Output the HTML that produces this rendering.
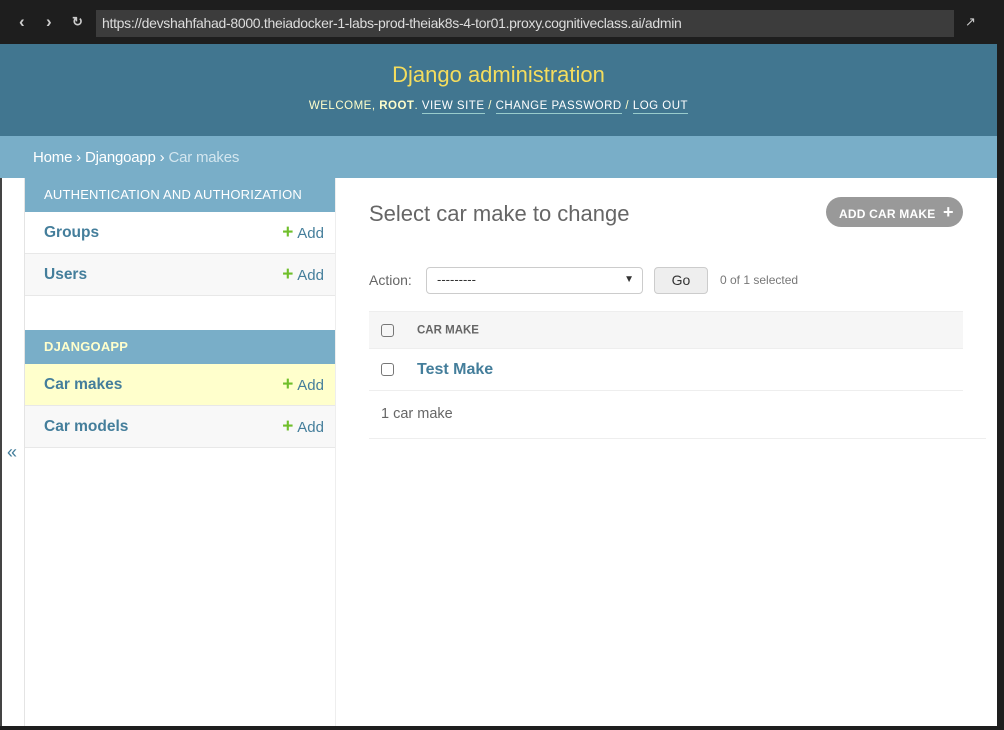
<!DOCTYPE html>
<html><head><style>
*{box-sizing:border-box;margin:0;padding:0}
body{width:1004px;height:730px;background:#1e1e1e;font-family:"Liberation Sans",sans-serif;position:relative;overflow:hidden}
.bar{position:absolute;left:0;top:0;width:1004px;height:44px;background:#1e1e1e}
.url{position:absolute;left:96px;top:10px;width:858px;height:27px;background:#3c3c3c;color:#ddd;font-size:14px;line-height:27px;padding-left:6px;letter-spacing:-0.3px}
.nav{position:absolute;top:12px;color:#ccc;font-size:17px;font-weight:bold}
.page{position:absolute;left:0;top:44px;width:997px;height:682px;background:#fff;overflow:hidden}
.hdr{height:92px;background:#417690;text-align:center}
.hdr h1{font-weight:normal;color:#f5dd5d;font-size:22px;padding-top:18px}
.hdr .u{color:#ffc;font-size:11.5px;margin-top:12px;letter-spacing:.5px}
.hdr .u a{color:#fff;border-bottom:1px solid #9cc;padding-bottom:1px}
.bc{height:42px;background:#79aec8;color:#fff;font-size:15px;line-height:44px;padding-left:33px;letter-spacing:-0.2px}
.bc span{color:#d3e6ef}
.lb{position:absolute;left:0;top:134px;width:2px;height:548px;background:#444}
.tog{position:absolute;left:7px;top:398px;color:#447e9b;font-size:18px}
.side{position:absolute;left:24px;top:134px;width:312px;height:548px;border-left:1px solid #e4e4e4;border-right:1px solid #eee}
.cap{height:34px;background:#79aec8;color:#fff;font-size:13px;line-height:34px;padding-left:19px;letter-spacing:.2px}
.row{height:42px;border-bottom:1px solid #e8e8e8;line-height:42px;padding-left:19px;font-size:15.5px;font-weight:bold;color:#447e9b;position:relative}
.row .add{position:absolute;right:11px;top:0;font-weight:normal;color:#447e9b;font-size:15px}
.add b{color:#70bf2b;font-size:19px;margin-right:4px}
.main{position:absolute;left:369px;top:134px;width:594px}
h2{font-weight:normal;font-size:22px;color:#666;position:absolute;top:23px;left:0}
.btn{position:absolute;left:457px;top:19px;width:137px;height:30px;border-radius:15px;background:#999;color:#fff;font-size:12px;font-weight:bold;line-height:30px;padding-left:13px;letter-spacing:.2px}
.act{position:absolute;top:89px;left:0;font-size:14px;color:#666;width:600px;line-height:27px}
.sel{position:absolute;left:57px;top:0;width:217px;height:27px;border:1px solid #ccc;border-radius:4px;font-size:13px;color:#333;line-height:24px;padding-left:10px}
.go{position:absolute;left:285px;top:0;width:54px;height:27px;border:1px solid #ccc;border-radius:4px;background:#eee;text-align:center;line-height:25px;color:#333}
.cnt{position:absolute;left:351px;top:0;font-size:12px;color:#777}
table{position:absolute;top:133px;left:0;width:594px;border-collapse:collapse}
th{height:37px;background:#f6f6f6;text-align:left;font-size:11.5px;color:#666;border-bottom:1px solid #eee;border-top:1px solid #eee}
td{height:42px;border-bottom:1px solid #eee;font-weight:bold;color:#447e9b;font-size:16px}
.cb{display:inline-block;width:13px;height:13px;border:1px solid #777;border-radius:3px;margin:0 23px 0 12px;vertical-align:middle}
.pg{position:absolute;top:213px;left:0;width:617px;height:48px;border-bottom:1px solid #eee;font-size:14.5px;color:#666;line-height:46px;padding-left:12px}
</style></head><body>
<div class="bar">
<div class="nav" style="left:19px">&#8249;</div><div class="nav" style="left:46px">&#8250;</div><div class="nav" style="left:72px;font-size:13px;top:14px">&#8635;</div>
<div class="url">https://devshahfahad-8000.theiadocker-1-labs-prod-theiak8s-4-tor01.proxy.cognitiveclass.ai/admin</div>
<div class="nav" style="left:965px;font-size:13px;font-weight:normal;top:14px">&#8599;</div>
</div>
<div class="page">
<div class="hdr"><h1>Django administration</h1>
<div class="u">WELCOME, <b>ROOT</b>. <a>VIEW SITE</a> / <a>CHANGE PASSWORD</a> / <a>LOG OUT</a></div></div>
<div class="bc">Home › Djangoapp › <span>Car makes</span></div>
<div class="lb"></div>
<div class="tog">«</div>
<div class="side">
<div class="cap">AUTHENTICATION AND AUTHORIZATION</div>
<div class="row">Groups<span class="add"><b>+</b>Add</span></div>
<div class="row" style="background:#f8f8f8">Users<span class="add"><b>+</b>Add</span></div>
<div style="height:34px"></div>
<div class="cap" style="color:#ffc;font-weight:bold">DJANGOAPP</div>
<div class="row" style="background:#ffc">Car makes<span class="add"><b>+</b>Add</span></div>
<div class="row" style="background:#f8f8f8">Car models<span class="add"><b>+</b>Add</span></div>
</div>
<div class="main">
<h2>Select car make to change</h2>
<div class="btn">ADD CAR MAKE <span style="font-size:18px;margin-left:4px">+</span></div>
<div class="act">Action:<div class="sel">---------<span style="position:absolute;right:8px;font-size:10px">&#9660;</span></div><div class="go">Go</div><div class="cnt">0 of 1 selected</div></div>
<table><tr><th><span class="cb"></span>CAR MAKE</th></tr>
<tr><td><span class="cb"></span>Test Make</td></tr></table>
<div class="pg">1 car make</div>
</div>
</div>
</body></html>
